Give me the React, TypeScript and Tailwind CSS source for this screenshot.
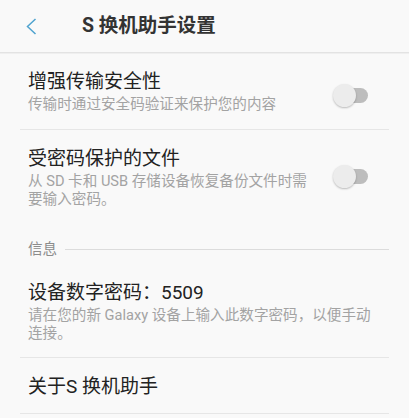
import React from "react";

const font = { fontFamily: 'Roboto, "Noto Sans CJK SC", sans-serif' };

function Toggle() {
  return (
    <div className="relative w-[36px] h-[24px] shrink-0">
      <div className="absolute left-[12px] top-[4.5px] w-[23px] h-[15px] rounded-full bg-[#bdbdbd]" />
      <div className="absolute left-0 top-0 w-[23px] h-[23px] rounded-full bg-[#ececec] shadow-[0_1px_2px_rgba(0,0,0,0.25)]" />
    </div>
  );
}

export default function App() {
  return (
    <div className="w-[409px] h-[418px] overflow-hidden bg-[#f9f9f9]" style={font}>
      <div className="h-[53px] flex items-center border-b border-[#e3e3e3] shadow-[0_1px_0_#efefef]">
        <svg width="20" height="20" viewBox="0 0 20 20" className="ml-[22px]">
          <polyline points="13.5,3 5.5,10.5 13.5,18" fill="none" stroke="#4fa3cf" strokeWidth="1.5" />
        </svg>
        <div className="ml-[40px] text-[19.5px] font-bold text-[#333] leading-[24px]">S 换机助手设置</div>
      </div>

      <div className="mx-[20px]">
        <div className="flex items-center pl-[8px] pr-[20px] pt-[17px] pb-[16px] border-b border-[#e6e6e6]">
          <div className="flex-1">
            <div className="text-[19px] leading-[24px] text-[#222]">增强传输安全性</div>
            <div className="mt-[1px] text-[14.6px] leading-[18px] text-[#a3a3a3]">传输时通过安全码验证来保护您的内容</div>
          </div>
          <div className="mt-[8px]"><Toggle /></div>
        </div>

        <div className="flex items-center pl-[8px] pr-[20px] pt-[17px] pb-[16px]">
          <div className="flex-1">
            <div className="text-[19px] leading-[24px] text-[#222]">受密码保护的文件</div>
            <div className="mt-[1px] text-[14.6px] leading-[18px] text-[#a3a3a3]">
              从 SD 卡和 USB 存储设备恢复备份文件时需<br />要输入密码。
            </div>
          </div>
          <div className="mb-[2px]"><Toggle /></div>
        </div>

        <div className="flex items-center pl-[8px] pt-[15px] pb-[5px]">
          <div className="text-[14.6px] leading-[20px] text-[#8c8c8c]">信息</div>
          <div className="flex-1 ml-[8px] h-px bg-[#dcdcdc]" />
        </div>

        <div className="pl-[8px] pt-[17px] pb-[15px] border-b border-[#e6e6e6]">
          <div className="text-[19px] leading-[24px] text-[#222]">设备数字密码：5509</div>
          <div className="mt-[1px] text-[14.6px] leading-[18px] text-[#a3a3a3]">
            请在您的新 Galaxy 设备上输入此数字密码，以便手动<br />连接。
          </div>
        </div>

        <div className="pl-[8px] pt-[17px] pb-[14px] border-b border-[#e6e6e6]">
          <div className="text-[19px] leading-[24px] text-[#222]">关于S 换机助手</div>
        </div>
      </div>
    </div>
  );
}
